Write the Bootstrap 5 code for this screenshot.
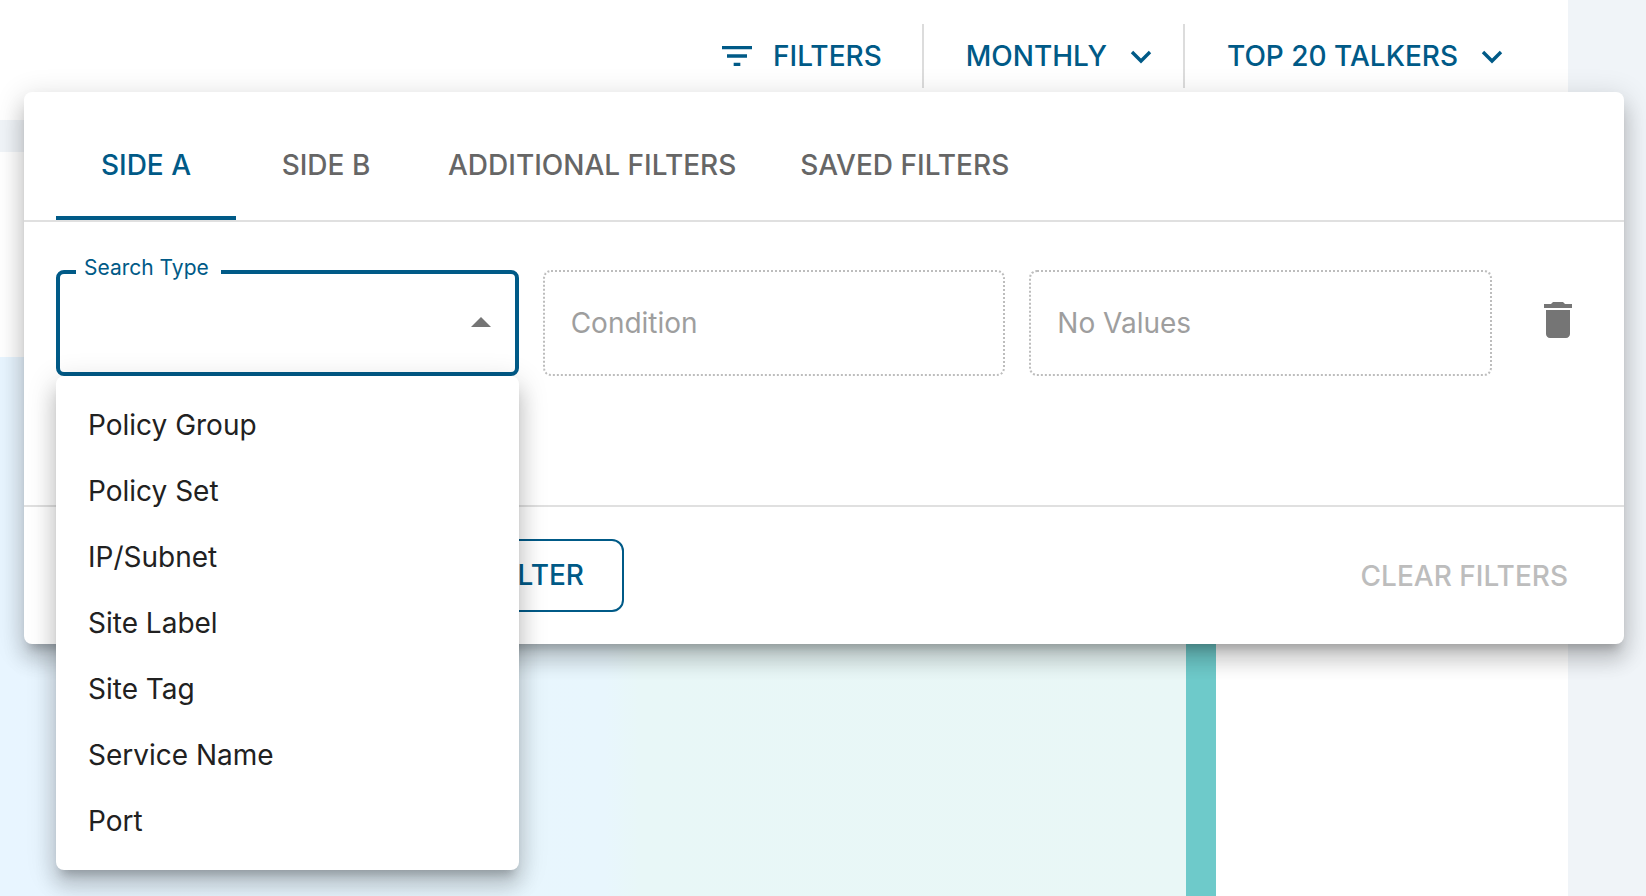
<!DOCTYPE html>
<html lang="en">
<head>
<meta charset="utf-8">
<meta name="viewport" content="width=device-width, initial-scale=1">
<title>Traffic filters</title>
<link href="https://cdn.jsdelivr.net/npm/bootstrap@5.3.0/dist/css/bootstrap.min.css" rel="stylesheet">
<style>
  :root { --brand: #005a87; --line: #e0e0e0; --page: #f0f4f8; }
  body { font-family: Inter, "Liberation Sans", sans-serif; font-size: 28px; line-height: 34px; background: var(--page); color: #212121; overflow: hidden; }
  .btn { --bs-btn-font-size: 28px; --bs-btn-line-height: 34px; --bs-btn-font-weight: 500; --bs-btn-color: var(--brand); --bs-btn-border-width: 0; }
  .page-shell { margin-right: 78px; height: 100vh; }
  .toolbar { height: 120px; padding: 24px 16px 32px 0; }
  .toolbar .btn { padding: 0 40px; }
  .toolbar .btn + .btn { padding-left: 42px; gap: 14px; border-left: 2px solid #dcdcdc; border-radius: 0; }
  .toolbar .btn-caret { padding-right: 22px; }
  .chart-card { margin-top: 32px; padding-top: 205px; }
  .flow-band { background: linear-gradient(90deg, #e8f5ff 0, #e8f6fd 51%, #e8f7f7 54%, #e9f7f6 100%); }
  .flow-node { width: 30px; background: #6ecaca; }
  .flow-rest { width: 352px; }
  .filter-panel { top: 92px; left: 24px; right: 22px; border-radius: 8px; box-shadow: 0 10px 10px -6px rgba(0,0,0,.2), 0 16px 20px 2px rgba(0,0,0,.14), 0 6px 28px 4px rgba(0,0,0,.12); }
  .filter-tabs { padding: 0 32px; border-bottom: 2px solid var(--line); }
  .filter-tabs .nav-link { min-width: 180px; padding: 56px 32px 34px; border: 0; border-bottom: 4px solid transparent; border-radius: 0; background: transparent; font-weight: 500; color: #666; }
  .filter-tabs .nav-link.active { color: var(--brand); border-bottom-color: var(--brand); }
  .filter-body { height: 285px; padding: 48px 24px 0 32px; border-bottom: 2px solid var(--line); }
  .field-grid { display: grid; grid-template-columns: repeat(3, 1fr); gap: 24px; }
  .field { height: 106px; padding: 0 26px; border-radius: 8px; font-size: 28px; background: #fff; }
  .field:disabled { border: 2px dotted #bdbdbd; background: #fff; }
  .field::placeholder { color: #9e9e9e; opacity: 1; }
  .field-open { border: 4px solid var(--brand); appearance: none; background-image: none; }
  .field-label { top: -14px; left: 20px; padding: 0 12px 0 8px; font-size: 21px; line-height: 24px; color: var(--brand); background: #fff; }
  .field-arrow { top: 29px; right: 14px; }
  .btn-trash { width: 84px; height: 100px; margin-left: 24px; padding: 0; color: #757575; }
  .type-menu { top: 100%; left: 0; padding: 16px 0; border: 0; border-radius: 8px; font-size: 28px; box-shadow: 0 10px 10px -6px rgba(0,0,0,.2), 0 16px 20px 2px rgba(0,0,0,.14), 0 6px 28px 4px rgba(0,0,0,.12); }
  .type-menu .dropdown-item { padding: 16px 32px; line-height: 34px; color: #212121; }
  .filter-foot { padding: 32px 56px 32px 32px; }
  .foot-actions { width: 568px; }
  .foot-actions .btn { padding: 17px 38px 18px; border: 2px solid var(--brand); border-radius: 12px; }
  .btn-clear:disabled { padding: 0; border: 0; opacity: 1; color: #bdbdbd; }
</style>
</head>
<body>
<main class="page-shell d-flex flex-column">
  <div class="toolbar bg-white d-flex justify-content-end">
    <button type="button" class="btn d-flex align-items-center">
      <svg class="me-3" width="40" height="40" viewBox="0 0 24 24" fill="currentColor" aria-hidden="true"><path d="M10 18h4v-2h-4v2zM3 6v2h18V6H3zm3 7h12v-2H6v2z"/></svg>
      FILTERS
    </button>
    <button type="button" class="btn btn-caret d-flex align-items-center">
      MONTHLY
      <svg width="40" height="40" viewBox="0 0 40 40" fill="none" stroke="currentColor" stroke-width="3.4" aria-hidden="true"><path d="M11 16l9 9 9-9"/></svg>
    </button>
    <button type="button" class="btn d-flex align-items-center">
      TOP 20 TALKERS
      <svg width="40" height="40" viewBox="0 0 40 40" fill="none" stroke="currentColor" stroke-width="3.4" aria-hidden="true"><path d="M11 16l9 9 9-9"/></svg>
    </button>
  </div>
  <div class="chart-card bg-white flex-grow-1 d-flex">
    <div class="flow-band flex-grow-1"></div>
    <div class="flow-node"></div>
    <div class="flow-rest"></div>
  </div>
</main>

<section class="filter-panel position-absolute bg-white" aria-label="Filters">
  <nav class="nav filter-tabs" role="tablist">
    <button type="button" class="nav-link active" role="tab" aria-selected="true">SIDE A</button>
    <button type="button" class="nav-link" role="tab">SIDE B</button>
    <button type="button" class="nav-link" role="tab">ADDITIONAL FILTERS</button>
    <button type="button" class="nav-link" role="tab">SAVED FILTERS</button>
  </nav>
  <div class="filter-body d-flex align-items-start">
    <div class="field-grid flex-grow-1">
      <div class="position-relative">
        <select id="search-type" class="field field-open w-100 d-block"><option></option></select>
        <label for="search-type" class="field-label position-absolute">Search Type</label>
        <svg class="field-arrow position-absolute" width="48" height="48" viewBox="0 0 24 24" fill="#757575" aria-hidden="true"><path d="M7 14l5-5 5 5z"/></svg>
        <div class="dropdown-menu type-menu show w-100">
          <button type="button" class="dropdown-item">Policy Group</button>
          <button type="button" class="dropdown-item">Policy Set</button>
          <button type="button" class="dropdown-item">IP/Subnet</button>
          <button type="button" class="dropdown-item">Site Label</button>
          <button type="button" class="dropdown-item">Site Tag</button>
          <button type="button" class="dropdown-item">Service Name</button>
          <button type="button" class="dropdown-item">Port</button>
        </div>
      </div>
      <input type="text" class="field w-100" placeholder="Condition" aria-label="Condition" disabled>
      <input type="text" class="field w-100" placeholder="No Values" aria-label="Values" disabled>
    </div>
    <button type="button" class="btn btn-trash flex-shrink-0 d-flex align-items-center justify-content-center" aria-label="Delete filter">
      <svg width="48" height="48" viewBox="0 0 24 24" fill="currentColor" aria-hidden="true"><path d="M6 19c0 1.100.9 2 2 2h8c1.100 0 2-.9 2-2V7H6v12zM19 4h-3.500l-1-1h-5l-1 1H5v2h14V4z"/></svg>
    </button>
  </div>
  <div class="filter-foot d-flex align-items-center justify-content-between">
    <div class="foot-actions d-flex justify-content-end">
      <button type="button" class="btn">SAVE FILTER</button>
    </div>
    <button type="button" class="btn btn-clear" disabled>CLEAR FILTERS</button>
  </div>
</section>
<script src="https://cdn.jsdelivr.net/npm/bootstrap@5.3.0/dist/js/bootstrap.bundle.min.js"></script>
</body>
</html>
